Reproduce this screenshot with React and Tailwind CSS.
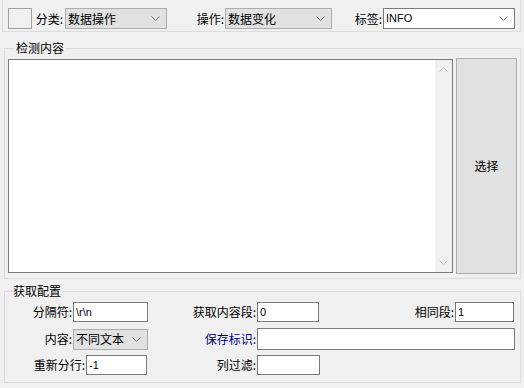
import React from "react";

const Chevron = ({ className = "" }) => (
  <svg width="9" height="5" viewBox="0 0 9 5" className={className}>
    <polyline points="0.5,0.5 4.5,4.5 8.5,0.5" fill="none" stroke="currentColor" strokeWidth="1" />
  </svg>
);

const Select = ({ value, w, white, latin }) => (
  <div
    className={`flex items-center justify-between h-[21px] pl-[2px] pr-[6px] border ${
      white ? "bg-white border-[#7a7a7a]" : "bg-[#e1e1e1] border-[#adadad]"
    } ${w}`}
  >
    <span
      className={
        latin
          ? "font-['Liberation_Sans',sans-serif] text-[11px] leading-[13px]"
          : "text-[12px] leading-[14px]"
      }
    >
      {value}
    </span>
    <Chevron className="text-[#707070]" />
  </div>
);

const Input = ({ value = "", w, h = "h-[20px]" }) => (
  <div
    className={`flex items-center pl-[2px] bg-white border border-[#7a7a7a] font-['Liberation_Sans',sans-serif] text-[11px] leading-[13px] ${w} ${h}`}
  >
    {value}
  </div>
);

const Label = ({ children, w, blue }) => (
  <div className={`text-right pr-[1px] text-[12px] leading-[14px] ${w} ${blue ? "text-[#000080]" : "text-black"}`}>
    {children}
  </div>
);

export default function App() {
  return (
    <div className="w-[524px] h-[388px] bg-[#f0f0f0] overflow-hidden text-black font-['Noto_Sans_CJK_SC',sans-serif]">
      {/* top bar */}
      <div className="ml-[2px] w-[519px] h-[32px] border-x border-b border-[#dcdcdc] flex items-start pt-[8px] pl-[5px]">
        <div className="w-[24px] h-[21px] border border-[#a0a0a0] bg-[#f0f0f0]" />
        <div className="w-[33px] h-[21px] flex items-center justify-end pr-[2px] text-[12px]">分类:</div>
        <Select value="数据操作" w="w-[102px]" />
        <div className="w-[58px] h-[21px] flex items-center justify-end pr-[1px] text-[12px]">操作:</div>
        <Select value="数据变化" w="w-[107px]" />
        <div className="w-[51px] h-[21px] flex items-center justify-end pr-[1px] text-[12px]">标签:</div>
        <Select value="INFO" w="w-[132px]" white latin />
      </div>

      {/* 检测内容 */}
      <fieldset className="mt-[10px] ml-[4px] w-[517px] h-[237px] border border-[#dcdcdc] pl-[3px] pt-[4px]">
        <legend className="ml-[7px] px-[1px] text-[12px] leading-[12px]">检测内容</legend>
        <div className="flex items-start gap-[3px]">
          <div className="mt-[1px] w-[445px] h-[214px] bg-white border border-[#7a7a7a] flex justify-end">
            <div className="w-[17px] h-full bg-[#f0f0f0] flex flex-col items-center justify-between py-[7px]">
              <Chevron className="text-[#c4c4c4] rotate-180" />
              <Chevron className="text-[#c4c4c4]" />
            </div>
          </div>
          <div className="w-[61px] h-[216px] bg-[#e1e1e1] border border-[#adadad] flex items-center justify-center text-[12px]">
            选择
          </div>
        </div>
      </fieldset>

      {/* 获取配置 */}
      <fieldset className="mt-[6px] ml-[4px] w-[517px] h-[98px] border border-[#dcdcdc] pt-[5px]">
        <legend className="ml-[7px] px-[1px] text-[12px] leading-[12px]">获取配置</legend>
        <div className="flex items-center h-[20px]">
          <Label w="w-[68px]">分隔符:</Label>
          <Input value={"\\r\\n"} w="w-[75px]" />
          <Label w="w-[109px]">获取内容段:</Label>
          <Input value="0" w="w-[62px]" />
          <Label w="w-[136px]">相同段:</Label>
          <Input value="1" w="w-[59px]" />
        </div>
        <div className="flex items-center h-[22px] mt-[6px]">
          <Label w="w-[68px]">内容:</Label>
          <Select value="不同文本" w="w-[75px]" />
          <Label w="w-[109px]" blue>保存标识:</Label>
          <Input w="w-[258px]" h="h-[22px]" />
        </div>
        <div className="flex items-center h-[20px] mt-[5px]">
          <Label w="w-[81px]">重新分行:</Label>
          <Input value="-1" w="w-[61px]" />
          <Label w="w-[110px]">列过滤:</Label>
          <Input w="w-[63px]" />
        </div>
      </fieldset>
    </div>
  );
}
